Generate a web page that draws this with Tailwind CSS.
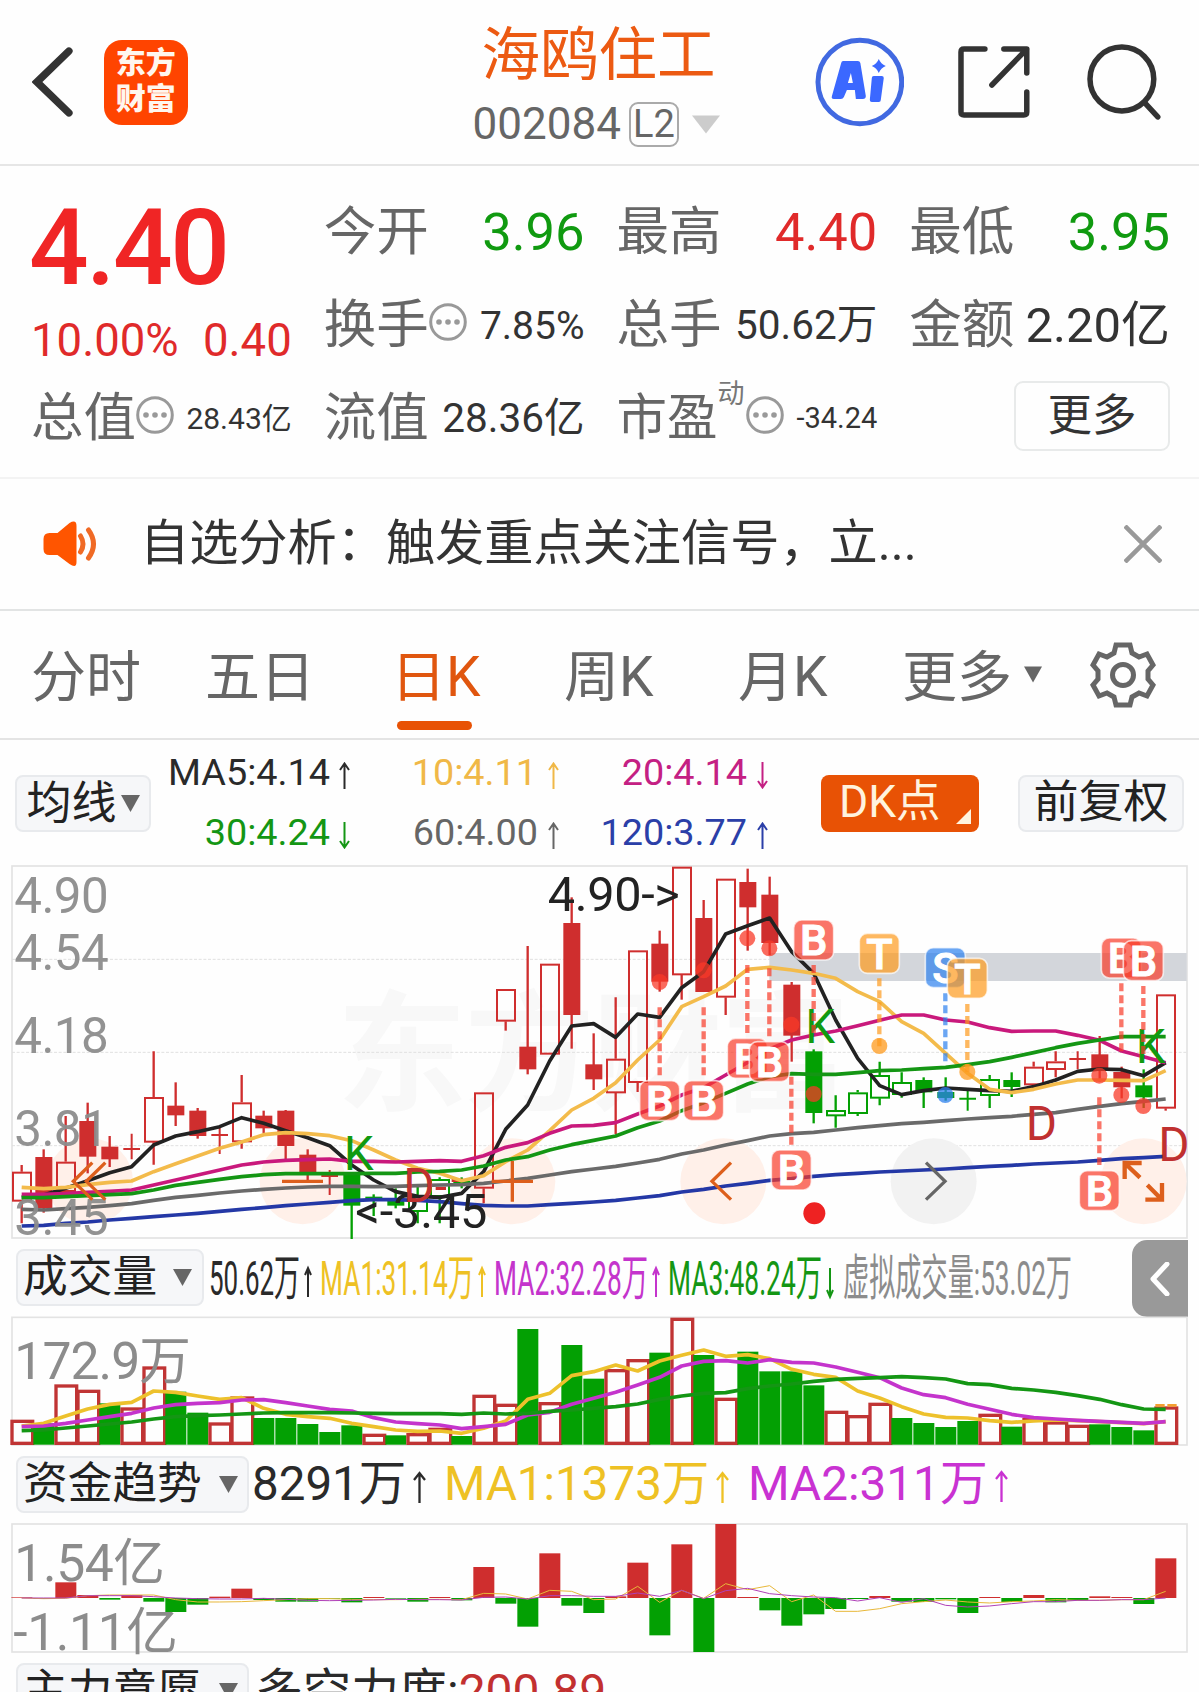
<!DOCTYPE html>
<html lang="zh-CN">
<head>
    <meta charset="UTF-8">
    <meta name="viewport" content="width=device-width, initial-scale=1.0">
    <script src="https://cdn.jsdelivr.net/npm/@tailwindcss/browser@4"></script>
    <title>海鸥住工 002084</title>
</head>
<body class="bg-[#fefefe]">
<div class="w-[1199px] h-[1692px] overflow-hidden flex flex-col leading-none whitespace-nowrap font-['Roboto','Noto_Sans_CJK_SC',sans-serif] text-[#333]">

    <!-- header -->
    <header class="h-[166px] shrink-0 border-b-2 border-[#e6e6e6] flex items-center pl-[32px] pr-[36px]">
        <svg class="w-[42px] h-[70px]" viewBox="0 0 42 70" fill="none" stroke="#333" stroke-width="7.500" stroke-linecap="round"><path d="M37 4L5 35L37 66"/></svg>
        <div class="ml-[30px] w-[84px] h-[85px] rounded-[18px] bg-[#ff4400] text-[#fff6ee] font-black text-[30px] flex flex-col items-center justify-center gap-[6px] pb-[3px]">
            <span>东方</span><span>财富</span>
        </div>
        <div class="ml-[285px] w-[250px] h-full flex flex-col">
            <div class="mt-[26px] pl-[9px] text-[58.5px] text-[#ec5a12]">海鸥住工</div>
            <div class="mt-[17px] flex items-center text-[44px] text-[#666]">
                <span>002084</span>
                <span class="ml-[8px] w-[50px] h-[45px] border-2 border-[#aaa] rounded-[9px] flex items-center justify-center text-[38px]">L2</span>
                <svg class="ml-[13px] w-[28px] h-[19px]" viewBox="0 0 28 18"><path d="M0 0H28L14 18Z" fill="#ccc"/></svg>
            </div>
        </div>
        <svg class="ml-[93px] w-[90px] h-[90px]" viewBox="0 0 90 90">
            <circle cx="45" cy="45" r="42" fill="none" stroke="#4169e1" stroke-width="5"/>
            <path d="M28 24H43Q45 24 45.500 26L51 59Q51 62 48 62H41L40 53H32L29 60Q28 62 26 62H19Q16 62 17 59L26 27Q26.500 24 28 24ZM36 36L33 46H38Z" fill="#3b68ff" fill-rule="evenodd"/>
            <path d="M59 39H67Q69 39 69 41L66 63Q66 65 64 65H57Q55 65 55 63L57 41Q57 39 59 39Z" fill="#3b68ff"/>
            <path d="M64 22Q66 27 71 29Q66 31 64 36Q62 31 57 29Q62 27 64 22Z" fill="#3b68ff"/>
        </svg>
        <svg class="ml-[54px] w-[72px] h-[72px]" viewBox="0 0 72 72" fill="none" stroke="#333" stroke-width="5.500" stroke-linecap="round" stroke-linejoin="round"><path d="M27 3H6Q3 3 3 6V66Q3 69 6 69H66Q69 69 69 66V46M46 3H69V27M69 3L34 39"/></svg>
        <svg class="ml-[57px] w-[76px] h-[76px]" viewBox="0 0 76 76" fill="none" stroke="#333" stroke-width="5.500" stroke-linecap="round"><circle cx="35" cy="35" r="32"/><path d="M58 59L71 73"/></svg>
    </header>

    <!-- quote -->
    <section class="h-[313px] shrink-0 border-b-2 border-[#f3f3f3] pl-[31px] pr-[29px] pt-[20px] grid grid-cols-4 grid-rows-[93px_93px_93px] gap-x-[32px] text-[52.500px]">
        <div class="row-span-2 text-[#e02a2a]">
            <div class="mt-[10px] text-[105px] font-medium text-[#f02525] tracking-[-2.400px] ml-[-2px]">4.40</div>
            <div class="mt-[17px] flex justify-between text-[45.5px]"><span>10.00%</span><span>0.40</span></div>
        </div>
        <div class="flex items-center justify-between"><span class="text-[#666]">今开</span><span class="text-[#109a10]">3.96</span></div>
        <div class="flex items-center justify-between"><span class="text-[#666]">最高</span><span class="text-[#e02a2a]">4.40</span></div>
        <div class="flex items-center justify-between"><span class="text-[#666]">最低</span><span class="text-[#109a10]">3.95</span></div>

        <div class="flex items-center"><span class="text-[#666]">换手</span>
            <svg class="w-[38px] h-[38px] mt-[-8px] shrink-0 text-[#999]" viewBox="0 0 38 38" fill="currentColor"><circle cx="19" cy="19" r="17.300" fill="none" stroke="currentColor" stroke-width="3"/><circle cx="10" cy="19" r="2.800"/><circle cx="19" cy="19" r="2.800"/><circle cx="28" cy="19" r="2.800"/></svg>
            <span class="ml-auto text-[39px] pt-[2px]">7.85%</span></div>
        <div class="flex items-center justify-between"><span class="text-[#666]">总手</span><span class="text-[40.5px]">50.62万</span></div>
        <div class="flex items-center justify-between"><span class="text-[#666]">金额</span><span class="text-[49px]">2.20亿</span></div>

        <div class="flex items-center"><span class="text-[#666]">总值</span>
            <svg class="w-[38px] h-[38px] mt-[-8px] shrink-0 text-[#999]" viewBox="0 0 38 38" fill="currentColor"><circle cx="19" cy="19" r="17.300" fill="none" stroke="currentColor" stroke-width="3"/><circle cx="10" cy="19" r="2.800"/><circle cx="19" cy="19" r="2.800"/><circle cx="28" cy="19" r="2.800"/></svg>
            <span class="ml-auto text-[30px]">28.43亿</span></div>
        <div class="flex items-center justify-between"><span class="text-[#666]">流值</span><span class="text-[40.5px]">28.36亿</span></div>
        <div class="flex items-center"><span class="text-[#666] text-[50.500px]">市盈</span>
            <span class="text-[#777] text-[27px] mt-[-48px]">动</span>
            <svg class="ml-[1px] w-[38px] h-[38px] mt-[-8px] shrink-0 text-[#999]" viewBox="0 0 38 38" fill="currentColor"><circle cx="19" cy="19" r="17.300" fill="none" stroke="currentColor" stroke-width="3"/><circle cx="10" cy="19" r="2.800"/><circle cx="19" cy="19" r="2.800"/><circle cx="28" cy="19" r="2.800"/></svg>
            <span class="ml-auto text-[29px]">-34.24</span></div>
        <div class="flex items-center justify-end"><button class="mt-[-5px] w-[156px] h-[70px] border-2 border-[#e8eaea] rounded-[9px] text-[44.500px] leading-none flex items-center justify-center">更多</button></div>
    </section>

    <!-- notice -->
    <section class="h-[132px] shrink-0 border-b-2 border-[#e2e4e4] pl-[42px] pr-[37px] flex items-center">
        <svg class="w-[57px] h-[46px]" viewBox="0 0 56 46"><path d="M7 12H15L27 2Q34-2 34 5V41Q34 48 27 43L15 34H7Q1 34 1 28V18Q1 12 7 12Z" fill="#ff5500"/><path d="M38 15Q43 23 38 31M46 9Q56 23 46 37" fill="none" stroke="#f06a25" stroke-width="5" stroke-linecap="round"/></svg>
        <span class="ml-[41px] text-[49.200px]">自选分析：触发重点关注信号，立...</span>
        <svg class="ml-auto w-[38px] h-[38px]" viewBox="0 0 38 38" stroke="#999" stroke-width="4.500"><path d="M1 1L37 37M37 1L1 37"/></svg>
    </section>

    <!-- period tabs -->
    <nav class="h-[129px] shrink-0 border-b-2 border-[#e4e4e4] pl-[31px] flex items-center text-[55px] text-[#666]">
        <span class="w-[174px] pt-[5px]">分时</span>
        <span class="w-[186px] pt-[5px]">五日</span>
        <span class="w-[173px] h-full flex flex-col text-[#e0560f]"><span class="mt-[39px]">日K</span><span class="mt-[16px] ml-[6px] w-[75px] h-[9px] rounded-full bg-[#e85205]"></span></span>
        <span class="w-[174px] pt-[5px]">周K</span>
        <span class="w-[164px] pt-[5px]">月K</span>
        <span class="pt-[5px]">更多</span>
        <svg class="ml-[12px] w-[18px] h-[17px]" viewBox="0 0 18 16"><path d="M0 0H18L9 16Z" fill="#666"/></svg>
        <svg class="ml-[48px] w-[66px] h-[66px]" viewBox="0 0 66 66" fill="none" stroke="#666" stroke-width="5"><path d="M26 3H40L42 11L49 15L57 12L63 23L58 29V37L63 43L57 54L49 51L42 55L40 63H26L24 55L17 51L9 54L3 43L8 37V29L3 23L9 12L17 15L24 11Z"/><circle cx="33" cy="33" r="10.500"/></svg>
    </nav>

    <!-- moving averages -->
    <section class="h-[126px] shrink-0 flex items-center px-[15px] text-[37.800px]">
        <button class="w-[136px] h-[57px] shrink-0 rounded-[8px] border-2 border-[#e8eaed] bg-[#f6f7f9] text-[#222] text-[45px] leading-none flex items-center justify-center gap-[4px]">均线
            <svg class="w-[19px] h-[17px]" viewBox="0 0 19 17"><path d="M0 0H19L9.500 17Z" fill="#666"/></svg></button>
        <div class="w-[619px] grid grid-cols-[199px_209px_209px] gap-y-[22.200px]">
            <div class="flex items-center justify-end gap-[9px] text-[#2a2a2a]">MA5:4.14<svg class="w-[11px] h-[27px] mt-[5px]" viewBox="0 0 11 27" fill="none" stroke="currentColor" stroke-width="2"><path d="M5.500 27V2M1 8L5.500 1.500L10 8"/></svg></div>
            <div class="flex items-center justify-end gap-[11px] text-[#f0b847]">10:4.11<svg class="w-[11px] h-[27px] mt-[5px]" viewBox="0 0 11 27" fill="none" stroke="currentColor" stroke-width="2"><path d="M5.500 27V2M1 8L5.500 1.500L10 8"/></svg></div>
            <div class="flex items-center justify-end gap-[10px] text-[#c42083]">20:4.14<svg class="w-[11px] h-[27px] mt-[5px]" viewBox="0 0 11 27" fill="none" stroke="currentColor" stroke-width="2"><path d="M5.500 0V25M1 19L5.500 25.500L10 19"/></svg></div>
            <div class="flex items-center justify-end gap-[9px] text-[#149614]">30:4.24<svg class="w-[11px] h-[27px] mt-[5px]" viewBox="0 0 11 27" fill="none" stroke="currentColor" stroke-width="2"><path d="M5.500 0V25M1 19L5.500 25.500L10 19"/></svg></div>
            <div class="flex items-center justify-end gap-[10px] text-[#666]">60:4.00<svg class="w-[11px] h-[27px] mt-[5px]" viewBox="0 0 11 27" fill="none" stroke="currentColor" stroke-width="2"><path d="M5.500 27V2M1 8L5.500 1.500L10 8"/></svg></div>
            <div class="flex items-center justify-end gap-[10px] text-[#2b3fa8]">120:3.77<svg class="w-[11px] h-[27px] mt-[5px]" viewBox="0 0 11 27" fill="none" stroke="currentColor" stroke-width="2"><path d="M5.500 27V2M1 8L5.500 1.500L10 8"/></svg></div>
        </div>
        <button class="relative ml-[51px] w-[158px] h-[57px] shrink-0 rounded-[8px] bg-[#e85205] text-[#fff3de] text-[44.500px] leading-none flex items-center pl-[18px] pb-[2px]">DK点
            <svg class="absolute right-[8px] bottom-[8px] w-[15px] h-[15px]" viewBox="0 0 15 15"><path d="M15 0V15H0Z" fill="#fff3de"/></svg></button>
        <button class="ml-auto w-[166px] h-[57px] shrink-0 rounded-[8px] border-2 border-[#e8eaed] bg-[#f6f7f9] text-[#222] text-[45px] leading-none flex items-center justify-center pb-[2px]">前复权</button>
    </section>

    <!-- candles: one unit is a third of a pixel -->
    <svg id="kline" class="ml-[12px] w-[1175px] h-[372px] shrink-0 overflow-visible" viewBox="36 18 3525 1116"></svg>

    <!-- volume -->
    <section class="h-[79px] shrink-0 flex items-center pl-[16px]">
        <button class="w-[188px] h-[57px] shrink-0 rounded-[8px] border-2 border-[#e8eaed] bg-[#f6f7f9] text-[#222] text-[44.700px] leading-none flex items-center pl-[5px] gap-[16px]">成交量
            <svg class="w-[19px] h-[17px]" viewBox="0 0 19 17"><path d="M0 0H19L9.500 17Z" fill="#666"/></svg></button>
        <svg class="ml-[5px] w-[870px] h-[79px]" viewBox="209 1238 870 79" font-size="49">
            <text x="209" y="1295" textLength="91" lengthAdjust="spacingAndGlyphs" fill="#2a2a2a">50.62万</text>
            <text x="320" y="1295" textLength="154" lengthAdjust="spacingAndGlyphs" fill="#eec124">MA1:31.14万</text>
            <text x="494" y="1295" textLength="154" lengthAdjust="spacingAndGlyphs" fill="#c434cc">MA2:32.28万</text>
            <text x="668" y="1295" textLength="154" lengthAdjust="spacingAndGlyphs" fill="#149614">MA3:48.24万</text>
            <text x="843" y="1295" textLength="229" lengthAdjust="spacingAndGlyphs" fill="#8c8c8c">虚拟成交量:53.02万</text>
            <g fill="none" stroke-width="2">
                <path stroke="#2a2a2a" d="M308 1297V1269M305 1275L308 1268L311 1275"/>
                <path stroke="#eec124" d="M482 1297V1269M479 1275L482 1268L485 1275"/>
                <path stroke="#c434cc" d="M656 1297V1269M653 1275L656 1268L659 1275"/>
                <path stroke="#149614" d="M830 1268V1296M827 1290L830 1297L833 1290"/>
            </g>
        </svg>
        <div class="ml-auto mr-[11px] mt-[2px] w-[56px] h-[77px] rounded-l-[15px] bg-[#999] flex items-center justify-center">
            <svg class="w-[20px] h-[34px]" viewBox="0 0 20 34" fill="none" stroke="#fff" stroke-width="5" stroke-linecap="round" stroke-linejoin="round"><path d="M17 2L3 17L17 32"/></svg>
        </div>
    </section>
    <svg id="volume" class="ml-[12px] w-[1175px] h-[128px] shrink-0 overflow-visible" viewBox="36 231 3525 384"></svg>

    <!-- fund trend -->
    <section class="h-[79px] shrink-0 flex items-center pl-[16px]">
        <button class="w-[233px] h-[57px] shrink-0 rounded-[8px] border-2 border-[#e8eaed] bg-[#f6f7f9] text-[#222] text-[44.700px] leading-none flex items-center pl-[5px] gap-[17px]">资金趋势
            <svg class="w-[19px] h-[17px]" viewBox="0 0 19 17"><path d="M0 0H19L9.500 17Z" fill="#666"/></svg></button>
        <div class="ml-[3px] w-[192px] flex items-center gap-[7px] text-[#2a2a2a] text-[47.500px]">8291万<svg class="w-[13px] h-[32px] mt-[4px]" viewBox="0 0 13 32" fill="none" stroke="currentColor" stroke-width="2.300"><path d="M6.500 32V2M1 9L6.500 2L12 9"/></svg></div>
        <div class="w-[304px] flex items-center gap-[7px] text-[#eec124] text-[47.500px]">MA1:1373万<svg class="w-[13px] h-[32px] mt-[4px]" viewBox="0 0 13 32" fill="none" stroke="currentColor" stroke-width="2.300"><path d="M6.500 32V2M1 9L6.500 2L12 9"/></svg></div>
        <div class="flex items-center gap-[7px] text-[#c932d2] text-[47.700px]">MA2:311万<svg class="w-[13px] h-[32px] mt-[4px]" viewBox="0 0 13 32" fill="none" stroke="currentColor" stroke-width="2.300"><path d="M6.500 32V2M1 9L6.500 2L12 9"/></svg></div>
    </section>
    <svg id="fund" class="ml-[12px] w-[1175px] h-[128px] shrink-0 overflow-visible" viewBox="36 853 3525 384"></svg>

    <!-- main force -->
    <section class="h-[79px] shrink-0 flex items-center pl-[16px] text-[48px]">
        <button class="w-[233px] h-[57px] shrink-0 rounded-[8px] border-2 border-[#e8eaed] bg-[#f6f7f9] text-[#222] text-[44.700px] leading-none flex items-center pl-[5px] gap-[17px]">主力意愿
            <svg class="w-[19px] h-[17px]" viewBox="0 0 19 17"><path d="M0 0H19L9.500 17Z" fill="#666"/></svg></button>
        <span class="ml-[6px] text-[#2a2a2a]">多空力度:</span><span class="text-[#c23030]">200.89</span>
    </section>
</div>

<script>
    const RED = "#cf2e2e", GREEN = "#03a003";
    const x = (i) => 65 + 66 * i;
    const line = (ys, color, w) => `<polyline points="${ys.map((y, i) => x(i) + "," + y).join(" ")}" fill="none" stroke="${color}" stroke-width="${w}" stroke-linejoin="round"/>`;

    // type, high, top, bottom, low (upper case is a solid body, x / y a doji cross)
    const candles = [
        ["r",915,935,1024,1090],["R",868,891,1045,1058],["r",768,905,995,995],["R",728,783,890,940],["R",828,860,898,921],["x",821,867,867,898],
        ["r",574,711,847,914],["R",667,737,766,798],["R",744,752,828,836],["x",803,825,825,882],["r",645,727,846,866],["R",752,767,805,820],
        ["R",750,752,858,898],["R",868,884,938,960],["x",930,948,948,1005],["G",938,938,1037,1137],["G",1003,1010,1018,1068],["G",985,1020,1037,1045],
        ["g",975,1008,1055,1090],["g",952,957,1010,1090],["G",952,962,970,985],["r",697,697,985,1030],["r",387,387,484,512],["R",258,560,628,643],
        ["r",311,311,583,583],["R",112,189,465,566],["R",520,613,658,690],["r",412,596,699,822],["r",271,271,668,696],["R",212,251,365,395],
        ["r",20,20,345,419],["R",120,174,396,396],["r",56,56,412,465],["R",26,66,142,272],["R",50,104,249,285],["R",366,374,527,605],
        ["G",568,574,759,790],["g",706,750,768,803],["g",690,697,761,768],["g",605,645,715,736],["g",637,666,704,713],["G",652,660,697,744],
        ["G",652,696,714,722],["y",685,716,716,752],["g",645,657,707,744],["G",637,660,681,711],["r",605,620,675,675],["r",574,604,629,652],
        ["x",574,597,597,628],["R",528,583,628,665],["R",620,636,682,715],["G",628,676,712,744],["r",403,403,745,752]
    ];
    const ma5 = [1012,1005,985,962,938,920,855,828,815,800,773,790,812,833,857,915,960,995,1009,1012,1000,935,808,735,603,498,491,532,462,472,383,335,222,197,174,275,340,480,595,677,704,692,684,688,692,694,680,660,634,627,629,647,608];
    const ma10 = [982,986,982,974,967,963,935,911,888,865,846,824,818,821,827,842,870,900,925,940,962,947,905,870,812,750,715,668,600,540,440,410,378,328,322,330,340,355,395,425,485,520,580,640,688,698,688,672,660,660,661,662,632];
    const ma20 = [1003,1003,1001,997,994,990,975,960,945,930,915,906,901,899,897,904,904,906,904,902,904,887,862,848,820,798,796,788,762,738,705,683,645,607,567,540,525,513,497,481,465,465,480,486,503,514,513,513,526,541,573,590,608];
    const ma30 = [1013,1013,1010,1007,1004,1001,990,976,967,958,950,944,941,941,941,941,940,940,936,934,930,918,900,890,870,854,841,828,803,783,752,728,700,672,650,641,643,643,638,632,630,626,622,614,605,592,578,563,550,540,530,530,530];
    const ma60 = [1048,1050,1046,1042,1037,1031,1021,1012,1006,999,993,988,984,981,979,979,980,979,977,975,974,970,963,955,945,935,927,919,909,898,882,870,855,842,828,821,817,810,803,797,791,787,782,777,773,769,763,758,748,739,731,724,717];
    const ma120 = [1098,1096,1090,1086,1080,1075,1070,1065,1060,1054,1048,1043,1037,1032,1027,1022,1019,1019,1021,1025,1031,1036,1038,1038,1034,1030,1026,1021,1014,1007,996,988,978,970,961,956,949,944,940,936,933,930,927,923,919,916,912,909,906,901,896,893,889];

    let k = `<rect x="36" y="18" width="3525" height="1116" fill="none" stroke="#e3e3e3" stroke-width="5"/>
        <text x="1010" y="720" font-size="390" font-weight="700" textLength="1540" fill="#f8f8f8">东方财富</text>`;
    [298, 577, 857].forEach((y) => { k += `<path d="M36 ${y}H3561" stroke="#e0e0e0" stroke-width="3" stroke-dasharray="9 5"/>`; });
    [270, 908, 1537, 2170, 3431].forEach((cx) => { k += `<circle cx="${cx}" cy="964" r="129" fill="#fff0e9"/>`; });
    k += `<circle cx="2801" cy="964" r="129" fill="#f2f2f2"/><rect x="2308" y="279" width="1252" height="84" fill="#d3d6db"/>`;
    candles.forEach(([t, h, top, bot, low], i) => {
        const c = "rRx".includes(t) ? RED : GREEN;
        const cx = x(i);
        if (t === "x" || t === "y") {
            k += `<path d="M${cx} ${h}V${low}M${cx - 25} ${top}H${cx + 25}" stroke="${c}" stroke-width="6"/>`;
        } else if (t === "R" || t === "G") {
            k += `<path d="M${cx} ${h}V${low}" stroke="${c}" stroke-width="7"/><rect x="${cx - 25}" y="${top}" width="51" height="${bot - top}" fill="${c}"/>`;
        } else {
            k += `<path d="M${cx} ${h}V${top}M${cx} ${bot}V${low}" stroke="${c}" stroke-width="7"/><rect x="${cx - 26}" y="${top + 3}" width="54" height="${bot - top - 5}" fill="none" stroke="${c}" stroke-width="6"/>`;
        }
    });
    k += `<path d="M1307 985H1338M1355 961H1390" stroke="${RED}" stroke-width="10"/>`;
    k += line(ma5, "#222", 11) + line(ma10, "#f3bb4b", 11) + line(ma20, "#c9197c", 11) + line(ma30, "#149614", 11) + line(ma60, "#6a6a6a", 11) + line(ma120, "#2438a6", 11);

    // price scale and extreme prices
    [["4.90",160],["4.54",330],["4.18",579],["3.81",857],["3.45",1125]].forEach(([s, y]) => {
        k += `<text x="43" y="${y}" font-size="148" textLength="283" fill="#8c8c8c" fill-opacity=".95">${s}</text>`;
    });
    k += `<text x="1643" y="153" font-size="146" textLength="396" fill="#222">4.90-&gt;</text><text x="1066" y="1103" font-size="146" textLength="396" fill="#222">&lt;-3.45</text>`;
    [[1031,930],[2416,550],[3407,610]].forEach(([a, b]) => { k += `<text x="${a}" y="${b}" font-size="143" fill="#109a10">K</text>`; });
    [[1210,1027],[3077,840],[3475,903]].forEach(([a, b]) => { k += `<text x="${a}" y="${b}" font-size="143" fill="#c03030">D</text>`; });

    // letter, x, badge y, dash from, dash to, dot y
    const marks = [
        ["B",1979,722,442,650,366],["B",2111,722,442,650,331],["B",2242,595,315,520,235],["B",2308,605,325,533,265],["B",2374,930,650,855,494],["B",2441,240,315,525,702],
        ["T",2638,280,355,560,558],["S",2836,323,400,605,705],["T",2902,355,432,640,636],["B",3298,992,712,915,647],["B",3364,294,370,575,705],["B",3430,302,378,585,738]
    ];
    const tone = { B: "#f83a28", T: "#fd9a1c", S: "#2c80ee" };
    marks.forEach(([s, mx, my, d1, d2, dot]) => {
        k += `<path d="M${mx} ${d1}V${d2}" stroke="${tone[s]}" stroke-opacity=".7" stroke-width="13" stroke-dasharray="24 12"/>
            <circle cx="${mx}" cy="${dot}" r="24" fill="${tone[s]}" fill-opacity=".75"/>
            <rect x="${mx - 60}" y="${my - 60}" width="120" height="120" rx="24" fill="${tone[s]}" fill-opacity=".7" stroke="#fff" stroke-opacity=".7" stroke-width="5"/>
            <text x="${mx}" y="${my + 46}" font-size="130" font-weight="500" text-anchor="middle" fill="#fff" stroke="#fff" stroke-width="3">${s}</text>`;
    });

    // floating chart controls
    k += `<circle cx="2443" cy="1060" r="33" fill="#ee2222"/>
        <g fill="none" stroke="#dd5f1c" stroke-width="10">
        <path d="M277 908L220 964L277 1019M316 908L259 964L316 1019"/>
        <path d="M846 964H969M1475 964H1599M1537 903V1025"/>
        <path d="M2193 908L2136 964L2193 1019"/>
        <path stroke-width="13" d="M3374 957V909H3425M3374 909L3420 953M3436 1019H3486V969M3486 1019L3442 975"/></g>
        <path d="M2778 908L2835 964L2778 1019" fill="none" stroke="#666" stroke-width="10"/>`;
    document.getElementById("kline").innerHTML = k;

    const vols = ["r540","G550","r434","r450","G490","r503","r380","G455","G518","r548","r470","G534","G534","G552","G576","G556","r582","G586","r580","r564","G588","r465","r492","G267","r487","G315","G416","r388","r358","G338","r234","G345","r474","G335","G394","G394","G436","r513","r526","r489","G534","G549","G561","G543","r522","G560","r535","r545","r555","G553","G561","G571","r500"];
    const v1 = [558,550,528,507,493,487,453,457,468,478,473,505,523,530,535,550,560,570,574,573,580,565,543,478,460,407,395,375,393,363,346,330,349,344,356,388,403,412,453,474,500,522,532,534,542,547,543,540,542,545,548,551,545];
    const v2 = [560,558,550,540,530,520,504,494,490,488,480,479,488,498,508,513,533,546,551,555,566,560,553,525,517,493,475,457,435,412,378,364,362,369,359,367,369,381,397,413,444,464,473,493,508,523,533,537,541,544,547,550,545];
    const v3 = [572,570,564,558,552,546,537,530,527,525,522,519,518,518,518,519,520,521,521,521,523,519,522,520,514,510,505,500,492,478,468,460,458,446,438,432,424,418,415,413,410,413,417,431,434,445,450,457,467,478,494,507,508];
    let v = `<rect x="36" y="232" width="3525" height="383" fill="none" stroke="#e3e3e3" stroke-width="5"/>`;
    vols.forEach((s, i) => {
        const top = Number(s.slice(1));
        if (s[0] === "G") v += `<rect x="${x(i) - 31}" y="${top}" width="63" height="${614 - top}" fill="${GREEN}"/>`;
        else v += `<rect x="${x(i) - 29}" y="${top + 4}" width="62" height="${606 - top}" fill="none" stroke="#c03434" stroke-width="10"/>`;
    });
    v += `<path d="M3466 496H3530" stroke="#f3a030" stroke-width="8" stroke-dasharray="28 8"/>`;
    v += line(v1, "#edc12c", 11) + line(v2, "#c434cc", 11) + line(v3, "#149614", 11);
    v += `<text x="43" y="417" font-size="155" textLength="530" fill="#8c8c8c">172.9万</text>`;
    document.getElementById("volume").innerHTML = v;

    const funds = [1073,1077,1028,1066,1080,1066,1086,1117,1095,1071,1047,1081,1086,1086,1077,1088,1072,1077,1086,1072,1082,982,1092,1161,941,1098,1120,1070,969,1187,914,1237,853,1072,1112,1158,1124,1108,1078,1069,1086,1087,1079,1120,1072,1087,1066,1088,1083,1070,1072,1093,956];
    const f1 = [1075,1077,1076,1068,1066,1066,1066,1080,1087,1087,1086,1083,1080,1077,1077,1079,1080,1080,1079,1079,1080,1061,1063,1078,1052,1055,1080,1078,1040,1088,1052,1076,1032,1050,1038,1086,1066,1115,1115,1107,1092,1086,1081,1087,1090,1086,1084,1080,1082,1082,1080,1080,1055];
    const f2 = [1075,1075,1075,1068,1068,1068,1071,1075,1077,1078,1078,1076,1079,1082,1083,1082,1081,1079,1080,1080,1081,1073,1072,1078,1068,1068,1070,1070,1060,1070,1052,1077,1053,1046,1062,1068,1072,1074,1084,1074,1088,1077,1097,1102,1099,1092,1086,1086,1082,1082,1080,1080,1075];
    let f = `<rect x="36" y="853" width="3525" height="384" fill="none" stroke="#e3e3e3" stroke-width="5"/>`;
    funds.forEach((y, i) => {
        f += `<rect x="${x(i) - 31}" y="${Math.min(y, 1075)}" width="63" height="${Math.abs(y - 1075)}" fill="${y < 1075 ? RED : GREEN}"/>`;
    });
    f += line(f1, "#e8b83a", 3) + line(f2, "#b040b8", 3);
    f += `<text x="43" y="1024" font-size="155" textLength="452" fill="#8c8c8c">1.54亿</text><text x="40" y="1230" font-size="155" textLength="494" fill="#8c8c8c">-1.11亿</text>`;
    document.getElementById("fund").innerHTML = f;
</script>
</body>
</html>
